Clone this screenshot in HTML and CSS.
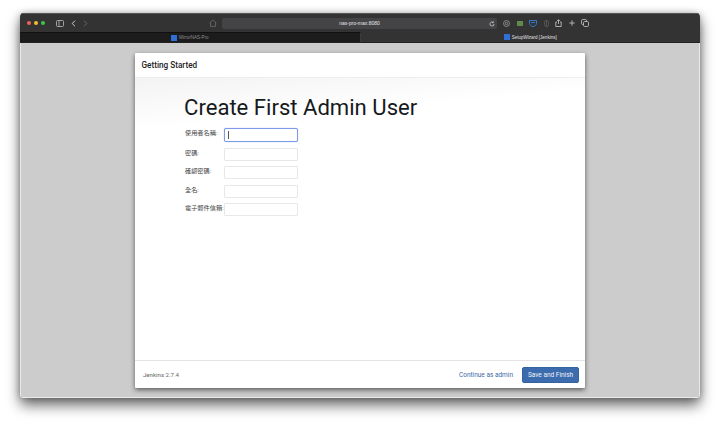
FILE: index.html
```html
<!DOCTYPE html>
<html lang="zh-Hant">
<head>
<meta charset="utf-8">
<title>SetupWizard [Jenkins]</title>
<link rel="stylesheet" href="styles.css">
</head>
<body>
<div class="window">
  <div class="toolbar">
    <div class="lights"><i class="light red"></i><i class="light yellow"></i><i class="light green"></i></div>
    <svg class="ic sidebar" width="8" height="7" viewBox="0 0 8 7"><rect x=".5" y=".5" width="7" height="6" rx="1" fill="none" stroke="#bbb" stroke-width=".8"/><path d="M3 .5v6" stroke="#bbb" stroke-width=".8"/></svg>
    <svg class="ic back" width="5" height="7" viewBox="0 0 5 7"><path d="M4 .7 1.200 3.500 4 6.300" fill="none" stroke="#ccc" stroke-width="1"/></svg>
    <svg class="ic fwd" width="5" height="7" viewBox="0 0 5 7"><path d="M1 .7 3.800 3.500 1 6.300" fill="none" stroke="#666" stroke-width="1"/></svg>
    <svg class="ic home" width="8" height="8" viewBox="0 0 8 8"><path d="M.6 4 4 .8 7.400 4M1.500 3.400V7.400h5V3.400" fill="none" stroke="#6e6e6e" stroke-width=".8"/></svg>
    <div class="address">
      <span class="url">nas-pro-max:8080</span>
      <svg class="reload" width="6" height="6" viewBox="0 0 6 6"><path d="M5 3A2 2 0 1 1 4.200 1.400M4.400 .4v1.300H3.100" fill="none" stroke="#ccc" stroke-width=".8"/></svg>
    </div>
    <div class="actions">
      <svg width="7" height="7" viewBox="0 0 7 7"><circle cx="3.500" cy="3.500" r="3" fill="none" stroke="#aaa" stroke-width=".7"/><circle cx="3.500" cy="3.500" r="1.200" fill="none" stroke="#aaa" stroke-width=".7"/></svg>
      <svg width="6" height="6" viewBox="0 0 6 6"><rect y="1" width="6" height="5" fill="#5e8a4a"/></svg>
      <svg width="8" height="7" viewBox="0 0 8 7"><path d="M.5 .6h7v2.600C7.500 5 5.500 6.400 4 6.600 2.500 6.400 .5 5 .5 3.200z" fill="none" stroke="#3b82e0" stroke-width=".9"/><path d="M2.200 2.600h3.600" stroke="#3b82e0" stroke-width=".9"/></svg>
      <svg width="5" height="7" viewBox="0 0 5 7"><rect x=".4" y=".4" width="4.200" height="6.200" rx="2" fill="none" stroke="#666" stroke-width=".7"/><path d="M2.500 .5v6" stroke="#666" stroke-width=".7"/></svg>
      <svg width="7" height="8" viewBox="0 0 7 8"><path d="M2 3H.8v4.500h5.400V3H5M3.500 5V.8M2.200 2 3.500 .7 4.800 2" fill="none" stroke="#ccc" stroke-width=".8"/></svg>
      <svg width="6" height="6" viewBox="0 0 6 6"><path d="M3 .3v5.400M.3 3h5.400" stroke="#ccc" stroke-width=".8"/></svg>
      <svg width="8" height="8" viewBox="0 0 8 8"><rect x=".5" y=".5" width="5" height="5" rx="1.200" fill="none" stroke="#ccc" stroke-width=".8"/><rect x="2.500" y="2.500" width="5" height="5" rx="1.200" fill="#333" stroke="#ccc" stroke-width=".8"/></svg>
    </div>
  </div>
  <div class="tabs">
    <div class="tab inactive"><i class="favicon"></i><span>MirrorNAS-Pro</span></div>
    <div class="tab active"><i class="favicon"></i><span>SetupWizard [Jenkins]</span></div>
  </div>
  <div class="viewport">
    <div class="card">
      <header class="card-head">Getting Started</header>
      <main class="card-body">
        <h1>Create First Admin User</h1>
        <form class="form">
          <label class="lab" for="u">使用者名稱:</label><div class="focus-wrap"><input class="field focus" id="u" type="text"><i class="caret"></i></div>
          <label class="lab" for="p">密碼:</label><input class="field" id="p" type="password">
          <label class="lab" for="c">確認密碼:</label><input class="field" id="c" type="password">
          <label class="lab" for="n">全名:</label><input class="field" id="n" type="text">
          <label class="lab" for="e">電子郵件信箱:</label><input class="field" id="e" type="text">
        </form>
      </main>
      <footer class="card-foot">
        <span class="version">Jenkins 2.7.4</span>
        <a class="skip">Continue as admin</a>
        <button class="save" type="button">Save and Finish</button>
      </footer>
    </div>
  </div>
</div>
</body>
</html>
```
FILE: styles.css
```css
* { box-sizing: border-box; }
html, body { margin: 0; height: 100%; background: #fff; overflow: hidden; }
body { padding: 13px 20px 27px; font-family: Roboto, "Noto Sans CJK TC", sans-serif; }

.window {
  height: 385px;
  display: flex;
  flex-direction: column;
  border-radius: 4px;
  overflow: hidden;
  box-shadow: 0 7px 14px rgba(0,0,0,.6), 0 0 6px rgba(0,0,0,.25);
}

.toolbar {
  height: 19px;
  flex: none;
  background: #333334;
  border-top: 1px solid #555;
  display: flex;
  align-items: center;
  padding-left: 7px;
}
.lights { display: flex; gap: 3px; }
.light { width: 4px; height: 4px; border-radius: 50%; display: block; }
.red { background: #f0605a; }
.yellow { background: #f5bd30; }
.green { background: #3fc54a; }
.ic { display: block; flex: none; }
.sidebar { margin-left: 11px; }
.back { margin-left: 7px; }
.fwd { margin-left: 7px; }
.home { margin-left: 121px; }
.address {
  width: 275px;
  height: 11px;
  margin-left: 5px;
  background: #444446;
  border-radius: 2px;
  display: flex;
  align-items: center;
  justify-content: center;
  position: relative;
}
.url { color: #e6e6e6; font-size: 5px; font-family: "Liberation Sans", sans-serif; }
.reload { position: absolute; right: 2px; top: 3px; }
.actions { display: flex; align-items: center; margin-left: 6px; gap: 6.500px; }

.tabs { height: 11px; flex: none; display: flex; background: #333334; border-bottom: 1px solid #222; }
.tab {
  flex: 1 1 0;
  display: flex;
  align-items: center;
  justify-content: center;
  gap: 2px;
  font-size: 4.500px;
  font-family: "Liberation Sans", sans-serif;
}
.tab.inactive { background: #1c1c1d; color: #8e8e8e; border-top: 1px solid #111; border-right: 1px solid #3c3c3c; }
.tab.active { color: #e0e0e0; }
.favicon { width: 6px; height: 6px; background: #2f6fd6; display: block; }

.viewport {
  flex: 1;
  min-height: 0;
  background: #cccccc;
  border-left: 1px solid #e9e9e9;
  border-right: 1px solid #e9e9e9;
  border-bottom: 1px solid #e9e9e9;
  padding: 10px 114px 9px;
}

.card {
  height: 100%;
  background: #fff;
  display: flex;
  flex-direction: column;
  border-radius: 1px;
  box-shadow: 0 2px 5px rgba(0,0,0,.55);
}
.card-head {
  height: 25px;
  flex: none;
  padding: 0 6.500px;
  display: flex;
  align-items: center;
  font-size: 8.200px;
  font-weight: 500;
  color: #222;
  border-bottom: 1px solid #eee;
}
.card-body {
  flex: 1;
  min-height: 0;
  padding: 16px 49px 0;
  background: linear-gradient(175deg, #f3f3f3 0, #fff 52px);
}
h1 {
  margin: 0 0 7px;
  font-size: 22.100px;
  line-height: 27px;
  font-weight: 400;
  color: #16191c;
}
.form {
  display: grid;
  grid-template-columns: 40px 74px;
  column-gap: 0;
  row-gap: 5.500px;
  align-items: start;
}
.lab { font-size: 6.200px; line-height: 10px; color: #444; padding-left: 1px; white-space: nowrap; }
.field {
  width: 74px;
  height: 13px;
  margin: 0;
  padding: 0 3px;
  border: 1px solid #e8e8e8;
  border-radius: 1px;
  background: #fff;
  outline: none;
  display: block;
}
.focus-wrap { position: relative; height: 14px; }
.field.focus {
  height: 14px;
  border: 1px solid #7d9be8;
  border-radius: 2px;
  box-shadow: 0 0 1px #7d9be8;
}
.caret { position: absolute; left: 4px; top: 3px; width: 1px; height: 8px; background: #555; display: block; }

.card-foot {
  height: 28px;
  flex: none;
  border-top: 1px solid #e4e4e4;
  display: flex;
  align-items: center;
  padding: 0 6px 0 8px;
  font-size: 6.500px;
}
.version { color: #666; font-size: 6.100px; }
.skip { margin-left: auto; color: #3e6aa8; }
.save {
  margin-left: 9px;
  width: 57px;
  height: 16px;
  padding: 0;
  border: 1px solid #34629f;
  border-radius: 2px;
  background: #3c6cad;
  color: #eef3fa;
  font: inherit;
}
```
